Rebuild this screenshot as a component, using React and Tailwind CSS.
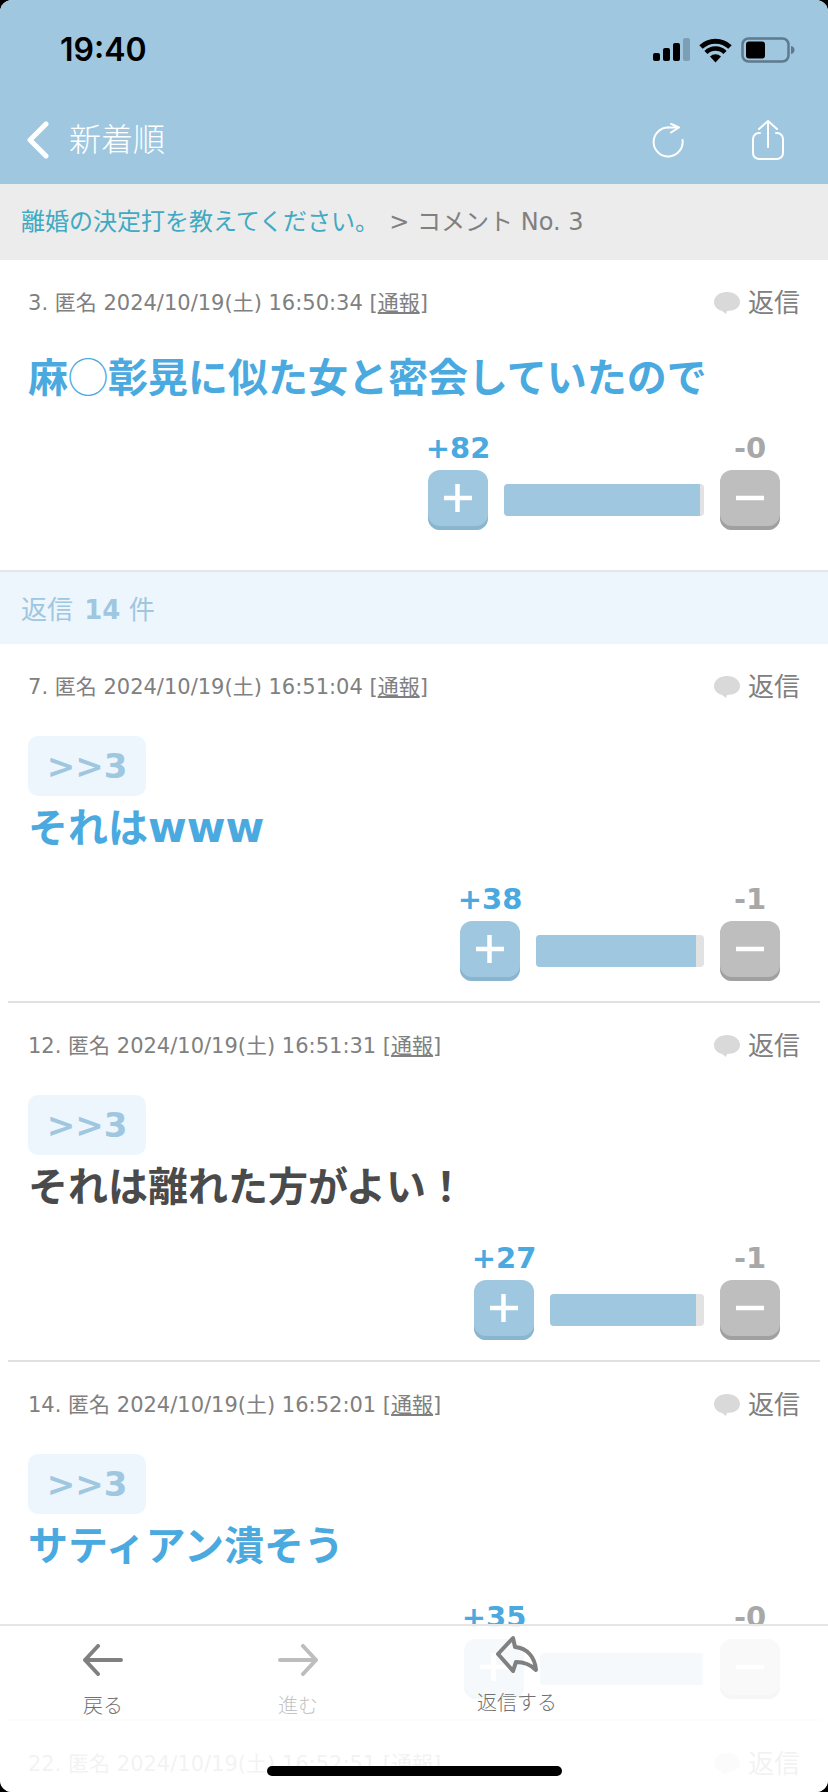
const F = "font-['DejaVu_Sans','Noto_Sans_CJK_JP',sans-serif]";

function Votes({ plus, minus, bar, fill }) {
  return (
    <div className="flex justify-end gap-4 pr-12">
      <div className="flex w-[60px] flex-col items-center">
        <div className="h-[30px] whitespace-nowrap text-[29px] font-bold leading-[30px] text-[#4aa9df]">{plus}</div>
        <div className="mt-[7px] h-[60px] w-[60px] rounded-xl bg-[#9fc7e0] shadow-[inset_0_-4px_0_#8ab5cf]">
          <svg width="60" height="60" viewBox="0 0 60 60"><path d="M29.500 14v28M16 28h28" stroke="#fff" strokeWidth="4.500" /></svg>
        </div>
      </div>
      <div className="flex flex-col justify-end pb-[14px]">
        <div className="h-8 overflow-hidden rounded bg-[#e2e2e2]" style={{ width: bar }}>
          <div className="h-8 bg-[#9fc7e0]" style={{ width: fill }} />
        </div>
      </div>
      <div className="flex w-[60px] flex-col items-center">
        <div className="h-[30px] whitespace-nowrap text-[29px] font-bold leading-[30px] text-[#a8a8a8]">{minus}</div>
        <div className="mt-[7px] h-[60px] w-[60px] rounded-xl bg-[#bebebe] shadow-[inset_0_-4px_0_#a0a0a0]">
          <svg width="60" height="60" viewBox="0 0 60 60"><path d="M16 28h28" stroke="#fff" strokeWidth="4.500" /></svg>
        </div>
      </div>
    </div>
  );
}

function Meta({ no, date }) {
  return (
    <div className="flex h-10 items-center justify-between pl-7 pr-[28px]">
      <div className="whitespace-nowrap text-[21px] leading-10 text-[#808080]">
        {no}. 匿名 {date} [<span className="underline">通報</span>]
      </div>
      <div className="flex items-center gap-2 text-[26px] leading-10 text-[#808080]">
        <svg width="26" height="24" viewBox="0 0 26 24">
          <path d="M13 1C6 1 0 5 0 11c0 5 4 8 8 9l4 3 1-3c7 0 13-3 13-9 0-6-6-10-13-10z" fill="#d9d9d9" />
        </svg>
        <span>返信</span>
      </div>
    </div>
  );
}

function Comment({ no, date, text, color, plus, minus, bar, fill }) {
  return (
    <div className="mx-2 flex h-[359px] flex-col border-b-2 border-[#e0e0e0] pt-[23px]">
      <div className="-mx-2"><Meta no={no} date={date} /></div>
      <div className="ml-5 mt-[29px] flex h-[60px] w-[118px] items-center justify-center rounded-[10px] bg-[#eef6fd] text-[34px] font-bold text-[#9fc7e0]">
        &gt;&gt;3
      </div>
      <div className="ml-5 mt-[2px] h-[60px] text-[40px] font-bold leading-[60px]" style={{ color }}>{text}</div>
      <div className="-mx-2 mt-[26px]">
        <Votes plus={plus} minus={minus} bar={bar} fill={fill} />
      </div>
    </div>
  );
}

export default function App() {
  return (
    <div className={`h-[1792px] w-[828px] bg-black ${F}`}>
      <div className="relative h-[1792px] w-[828px] overflow-hidden rounded-[12px] bg-white">
        <header className="h-[184px] bg-[#9fc7e0]">
          <div className="flex h-[100px] items-start justify-between pl-[60px] pr-[33px] pt-[34px]">
            <div className="font-['Inter',sans-serif] text-[32px] font-semibold leading-[32px] text-black">19:40</div>
            <div className="flex items-center gap-[9px] pt-[3px]">
              <svg width="37" height="24" viewBox="0 0 37 24">
                <rect x="0" y="15" width="7" height="8" rx="2" fill="#000" />
                <rect x="10" y="10" width="7" height="13" rx="2" fill="#000" />
                <rect x="20" y="5" width="7" height="18" rx="2" fill="#000" />
                <rect x="30" y="0" width="7" height="23" rx="2" fill="#7c9fb5" />
              </svg>
              <svg width="33" height="25" viewBox="0 0 33 25">
                <path d="M16.500 24.500l-5.500-6a8 8 0 0 1 11 0z" fill="#000" />
                <path d="M7 14.500a13.500 13.500 0 0 1 19 0" fill="none" stroke="#000" strokeWidth="4.500" />
                <path d="M2 9a21 21 0 0 1 29 0" fill="none" stroke="#000" strokeWidth="5" />
              </svg>
              <svg width="54" height="26" viewBox="0 0 54 26">
                <rect x="1.500" y="1.500" width="46" height="23" rx="6" fill="none" stroke="#5f7a8c" strokeWidth="2.500" />
                <rect x="5" y="4.500" width="19" height="17" rx="3" fill="#000" />
                <path d="M50 9c2.500.6 3.500 2 3.500 4s-1 3.400-3.500 4z" fill="#5f7a8c" />
              </svg>
            </div>
          </div>
          <div className="flex h-[84px] items-center justify-between pb-1 pl-[26px] pr-[44px]">
            <div className="flex items-center gap-5">
              <svg width="23" height="38" viewBox="0 0 23 38">
                <path d="M20 3L4 19l16 16" fill="none" stroke="#fff" strokeWidth="5" strokeLinecap="round" strokeLinejoin="round" />
              </svg>
              <span className="text-[32px] font-light leading-10 text-white">新着順</span>
            </div>
            <div className="flex items-center gap-[68px]">
              <svg width="32" height="35" viewBox="0 0 32 35">
                <path d="M16 4.500H27M19 .8l8 3.700-8 5" fill="none" stroke="#fff" strokeWidth="2" strokeLinecap="round" strokeLinejoin="round" />
                <path d="M16 4.500A14.500 14.500 0 1 0 30.500 17" fill="none" stroke="#fff" strokeWidth="2" strokeLinecap="round" />
              </svg>
              <svg width="32" height="40" viewBox="0 0 32 40">
                <path d="M8 13H7a6 6 0 0 0-6 6v14a6 6 0 0 0 6 6h18a6 6 0 0 0 6-6V19a6 6 0 0 0-6-6h-1M16 1v26M7 9l9-8 9 8" fill="none" stroke="#fff" strokeWidth="2" strokeLinecap="round" strokeLinejoin="round" />
              </svg>
            </div>
          </div>
        </header>

        <div className="flex h-[76px] items-center whitespace-pre bg-[#ececec] pl-[21px] text-[24px] text-[#808080]">
          <span className="text-[#41a9c2]">離婚の決定打を教えてください。</span>
          <span className="-ml-[5px]">  &gt; コメント No. 3</span>
        </div>

        <section className="h-[312px] border-b-2 border-[#e6e6e6] pt-[23px]">
          <Meta no={3} date="2024/10/19(土) 16:50:34" />
          <div className="ml-7 mt-[22px] h-[60px] text-[40px] font-bold leading-[60px] text-[#4aa9df]">
            麻<span className="font-['Noto_Sans_CJK_JP',sans-serif] font-normal">◯</span>彰晃に似た女と密会していたので
          </div>
          <div className="mt-[28px]">
            <Votes plus="+82" minus="-0" bar={200} fill={196} />
          </div>
        </section>

        <div className="flex h-[72px] items-center whitespace-pre bg-[#eef6fd] pl-[21px] pt-1 text-[26px] text-[#9fc7e0]">
          <span>返信 </span>
          <b className="ml-[3px]">14</b>
          <span> 件</span>
        </div>

        <Comment no={7} date="2024/10/19(土) 16:51:04" text={<>それは<span className="text-[42px]">www</span></>} color="#4aa9df" plus="+38" minus="-1" bar={168} fill={160} />
        <Comment no={12} date="2024/10/19(土) 16:51:31" text="それは離れた方がよい！" color="#4a4a4a" plus="+27" minus="-1" bar={154} fill={146} />
        <Comment no={14} date="2024/10/19(土) 16:52:01" text="サティアン潰そう" color="#4aa9df" plus="+35" minus="-0" bar={164} fill={162} />
        <div className="pt-[23px]">
          <Meta no={22} date="2024/10/19(土) 16:52:51" />
        </div>

        <div className="absolute inset-x-0 bottom-0 flex h-[168px] items-start border-t-2 border-[#e6e6e6] bg-white/90 text-[20px] font-light text-[#707070]">
          <div className="flex w-[206px] flex-col items-center pt-[18px]">
            <svg width="40" height="32" viewBox="0 0 40 32">
              <path d="M15 2L2 16l13 14M2 16h36" fill="none" stroke="#808080" strokeWidth="4" strokeLinecap="round" strokeLinejoin="round" />
            </svg>
            <span className="mt-4 leading-7">戻る</span>
          </div>
          <div className="flex w-[184px] flex-col items-center pt-[18px] text-[#c4c4c4]">
            <svg width="40" height="32" viewBox="0 0 40 32">
              <path d="M25 2l13 14-13 14M38 16H2" fill="none" stroke="#bdbdbd" strokeWidth="4" strokeLinecap="round" strokeLinejoin="round" />
            </svg>
            <span className="mt-4 leading-7">進む</span>
          </div>
          <div className="flex w-[254px] flex-col items-center pt-[9px]">
            <svg width="44" height="38" viewBox="0 0 44 38">
              <path d="M3 19L18 3l2 9c12 1 20 10 21 23-6-6-12-8-20-8l-3 9z" fill="none" stroke="#808080" strokeWidth="4" strokeLinejoin="round" />
            </svg>
            <span className="mt-4 leading-7">返信する</span>
          </div>
        </div>

        <div className="absolute bottom-4 left-[267px] h-[10px] w-[295px] rounded-full bg-black" />
      </div>
    </div>
  );
}
